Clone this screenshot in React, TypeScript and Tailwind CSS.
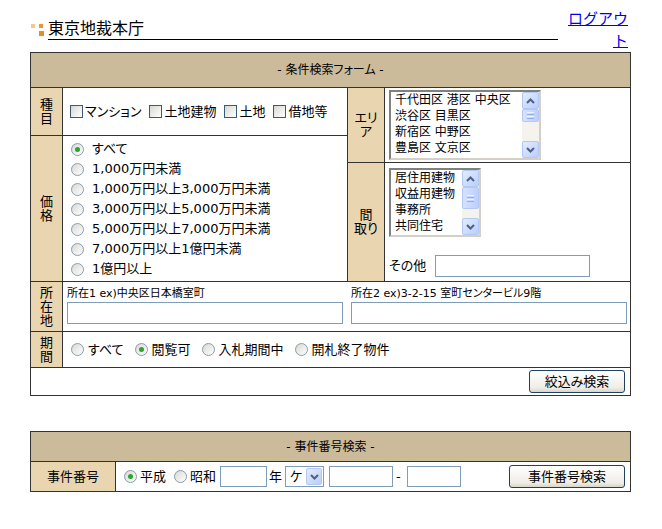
import React from "react";

const font = "font-['DejaVu_Sans','Noto_Sans_CJK_JP',sans-serif] [font-feature-settings:'palt']";

function Radio({ checked }: { checked?: boolean }) {
  return (
    <span className="flex items-center justify-center w-[13px] h-[13px] shrink-0 rounded-full border border-[#8a9ab0] bg-[linear-gradient(135deg,#d8d8d2,#ffffff)]">
      {checked && <span className="w-[5px] h-[5px] rounded-full bg-[#2aa62a]" />}
    </span>
  );
}

function Check() {
  return (
    <span className="inline-block w-[13px] h-[13px] shrink-0 border border-[#3c5a78] bg-[linear-gradient(135deg,#d8d8d2,#ffffff)]" />
  );
}

function Label({ lines, className }: { lines: string[]; className: string }) {
  return (
    <div className={`flex flex-col items-center justify-center shrink-0 bg-[#e9d5b0] border-r border-[#333] text-[13px] leading-[14px] ${className}`}>
      {lines.map((l) => (
        <span key={l}>{l}</span>
      ))}
    </div>
  );
}

function Chevron({ up }: { up?: boolean }) {
  return (
    <svg width="9" height="6" viewBox="0 0 9 6">
      <path d={up ? "M1 5 L4.5 1.5 L8 5" : "M1 1 L4.5 4.5 L8 1"} fill="none" stroke="#4d6185" strokeWidth="2" />
    </svg>
  );
}

function ScrollBtn({ up }: { up?: boolean }) {
  return (
    <div className="h-[17px] w-[17px] shrink-0 flex items-center justify-center rounded-[2px] border border-[#b4c8f6] bg-[linear-gradient(135deg,#e4ecff,#bacefb)]">
      <Chevron up={up} />
    </div>
  );
}

function ListBox({ items, className, thumb }: { items: string[]; className: string; thumb: string }) {
  return (
    <div className={`flex border-2 border-t-[#808080] border-l-[#808080] border-r-[#d4d0c8] border-b-[#d4d0c8] bg-white ${className}`}>
      <div className="flex-1 overflow-hidden pl-[4px] text-[12px] leading-[16px] whitespace-nowrap">
        {items.map((it) => (
          <div key={it}>{it}</div>
        ))}
      </div>
      <div className="w-[17px] flex flex-col bg-[#f4f3ee]">
        <ScrollBtn up />
        <div className={`rounded-[2px] border border-[#b4c8f6] bg-[linear-gradient(90deg,#d6e1fd,#bdd0fb)] flex flex-col items-center justify-center gap-[1px] ${thumb}`}>
          <span className="w-[7px] h-[1px] bg-[#eef3fe]" />
          <span className="w-[7px] h-[1px] bg-[#8eaef0]" />
          <span className="w-[7px] h-[1px] bg-[#eef3fe]" />
          <span className="w-[7px] h-[1px] bg-[#8eaef0]" />
        </div>
        <div className="flex-1" />
        <ScrollBtn />
      </div>
    </div>
  );
}

function XpButton({ children, className }: { children: React.ReactNode; className: string }) {
  return (
    <button className={`flex items-center justify-center rounded-[3px] border border-[#1f3f63] bg-[linear-gradient(180deg,#ffffff,#eeede7_80%,#d9d4c8)] text-[13px] leading-none ${className}`}>
      {children}
    </button>
  );
}

const prices = [
  "すべて",
  "1,000万円未満",
  "1,000万円以上3,000万円未満",
  "3,000万円以上5,000万円未満",
  "5,000万円以上7,000万円未満",
  "7,000万円以上1億円未満",
  "1億円以上",
];

export default function App() {
  return (
    <div className={`w-[662px] h-[529px] bg-white text-black text-[13px] ${font}`}>
      {/* title bar */}
      <div className="h-[52px] flex items-start pl-[30px]">
        <div className="mt-[24px] w-[14px] h-[12px] grid grid-cols-2 gap-x-[3px] gap-y-[2px]">
          <span className="w-[4px] h-[4px] ml-[1px] bg-[#f4c98c]" />
          <span className="w-[4px] h-[4px] bg-[#e8982c]" />
          <span />
          <span className="w-[5px] h-[5px] bg-[#e2911f]" />
        </div>
        <div className="ml-[4px] mt-[19px] w-[510px] border-b border-black text-[16px] leading-[20px]">東京地裁本庁</div>
        <a href="#" className="ml-[4px] mt-[8px] w-[66px] text-right text-[15px] leading-[22px] text-[#0000ee] underline [font-feature-settings:normal]">
          ログアウト
        </a>
      </div>

      {/* condition search */}
      <div className="ml-[30px] w-[601px] border border-[#333]">
        <div className="h-[35px] flex items-center justify-center bg-[#ccbb9a] border-b border-[#333] text-[12px]">
          - 条件検索フォーム -
        </div>

        <div className="flex h-[194px] border-b border-[#333]">
          <div className="w-[317px] flex flex-col border-r border-[#333]">
            <div className="flex h-[48px] border-b border-[#333]">
              <Label lines={["種", "目"]} className="w-[32px]" />
              <div className="flex items-center pl-[7px] gap-[8px]">
                {["マンション", "土地建物", "土地", "借地等"].map((t) => (
                  <span key={t} className="flex items-center gap-[2px]">
                    <Check />
                    {t}
                  </span>
                ))}
              </div>
            </div>
            <div className="flex flex-1">
              <Label lines={["価", "格"]} className="w-[32px]" />
              <div className="flex flex-col pl-[8px] pt-[3px]">
                {prices.map((p, i) => (
                  <div key={p} className="h-[20px] flex items-center gap-[8px]">
                    <Radio checked={i === 0} />
                    {p}
                  </div>
                ))}
              </div>
            </div>
          </div>

          <div className="flex-1 flex flex-col">
            <div className="flex h-[75px] border-b border-[#333]">
              <Label lines={["エリ", "ア"]} className="w-[37px]" />
              <div className="pl-[4px] pt-[2px]">
                <ListBox
                  items={["千代田区 港区 中央区", "渋谷区 目黒区", "新宿区 中野区", "豊島区 文京区"]}
                  className="w-[152px] h-[70px]"
                  thumb="h-[13px]"
                />
              </div>
            </div>
            <div className="flex flex-1">
              <Label lines={["間", "取り"]} className="w-[37px]" />
              <div className="flex flex-col pl-[4px] pt-[5px]">
                <ListBox items={["居住用建物", "収益用建物", "事務所", "共同住宅"]} className="w-[92px] h-[69px]" thumb="h-[22px]" />
                <div className="mt-[18px] flex items-center">
                  <span>その他</span>
                  <input className="ml-[9px] w-[155px] h-[22px] border border-[#7f9db9] outline-none" />
                </div>
              </div>
            </div>
          </div>
        </div>

        {/* location */}
        <div className="flex h-[50px] border-b border-[#333]">
          <Label lines={["所", "在", "地"]} className="w-[32px]" />
          <div className="flex gap-[8px] pl-[4px] pt-[6px]">
            <div className="w-[276px] flex flex-col">
              <span className="text-[11px] leading-[12px]">所在1 ex)中央区日本橋室町</span>
              <input className="mt-[2px] h-[22px] border border-[#7f9db9] outline-none" />
            </div>
            <div className="w-[276px] flex flex-col">
              <span className="text-[11px] leading-[12px]">所在2 ex)3-2-15 室町センタービル9階</span>
              <input className="mt-[2px] h-[22px] border border-[#7f9db9] outline-none" />
            </div>
          </div>
        </div>

        {/* period */}
        <div className="flex h-[36px] border-b border-[#333]">
          <Label lines={["期", "間"]} className="w-[32px]" />
          <div className="flex items-center pl-[8px]">
            {["すべて", "閲覧可", "入札期間中", "開札終了物件"].map((t, i) => (
              <span key={t} className="flex items-center gap-[4px] mr-[11px]">
                <Radio checked={i === 1} />
                {t}
              </span>
            ))}
          </div>
        </div>

        <div className="h-[27px] flex items-center justify-end pr-[5px]">
          <XpButton className="w-[96px] h-[23px]">絞込み検索</XpButton>
        </div>
      </div>

      {/* case number search */}
      <div className="ml-[30px] mt-[35px] w-[601px] border border-[#333]">
        <div className="h-[30px] flex items-center justify-center bg-[#ccbb9a] border-b border-[#333] text-[12px]">
          - 事件番号検索 -
        </div>
        <div className="flex h-[29px]">
          <div className="w-[85px] shrink-0 flex items-center justify-center bg-[#e9d5b0] border-r border-[#333]">事件番号</div>
          <div className="flex flex-1 items-center pl-[8px]">
            <Radio checked />
            <span className="ml-[3px]">平成</span>
            <span className="ml-[8px]">
              <Radio />
            </span>
            <span className="ml-[3px]">昭和</span>
            <input className="ml-[4px] w-[47px] h-[21px] border border-[#7f9db9] outline-none" />
            <span className="ml-[2px]">年</span>
            <div className="ml-[3px] w-[39px] h-[21px] flex items-center border border-[#7f9db9]">
              <span className="flex-1 pl-[4px]">ケ</span>
              <span className="w-[16px] h-[17px] mr-[1px] flex items-center justify-center rounded-[2px] border border-[#b4c8f6] bg-[linear-gradient(135deg,#e4ecff,#bacefb)]">
                <Chevron />
              </span>
            </div>
            <input className="ml-[5px] w-[64px] h-[21px] border border-[#7f9db9] outline-none" />
            <span className="ml-[3px]">-</span>
            <input className="ml-[6px] w-[54px] h-[21px] border border-[#7f9db9] outline-none" />
            <XpButton className="ml-auto mr-[5px] w-[116px] h-[23px]">事件番号検索</XpButton>
          </div>
        </div>
      </div>
    </div>
  );
}
